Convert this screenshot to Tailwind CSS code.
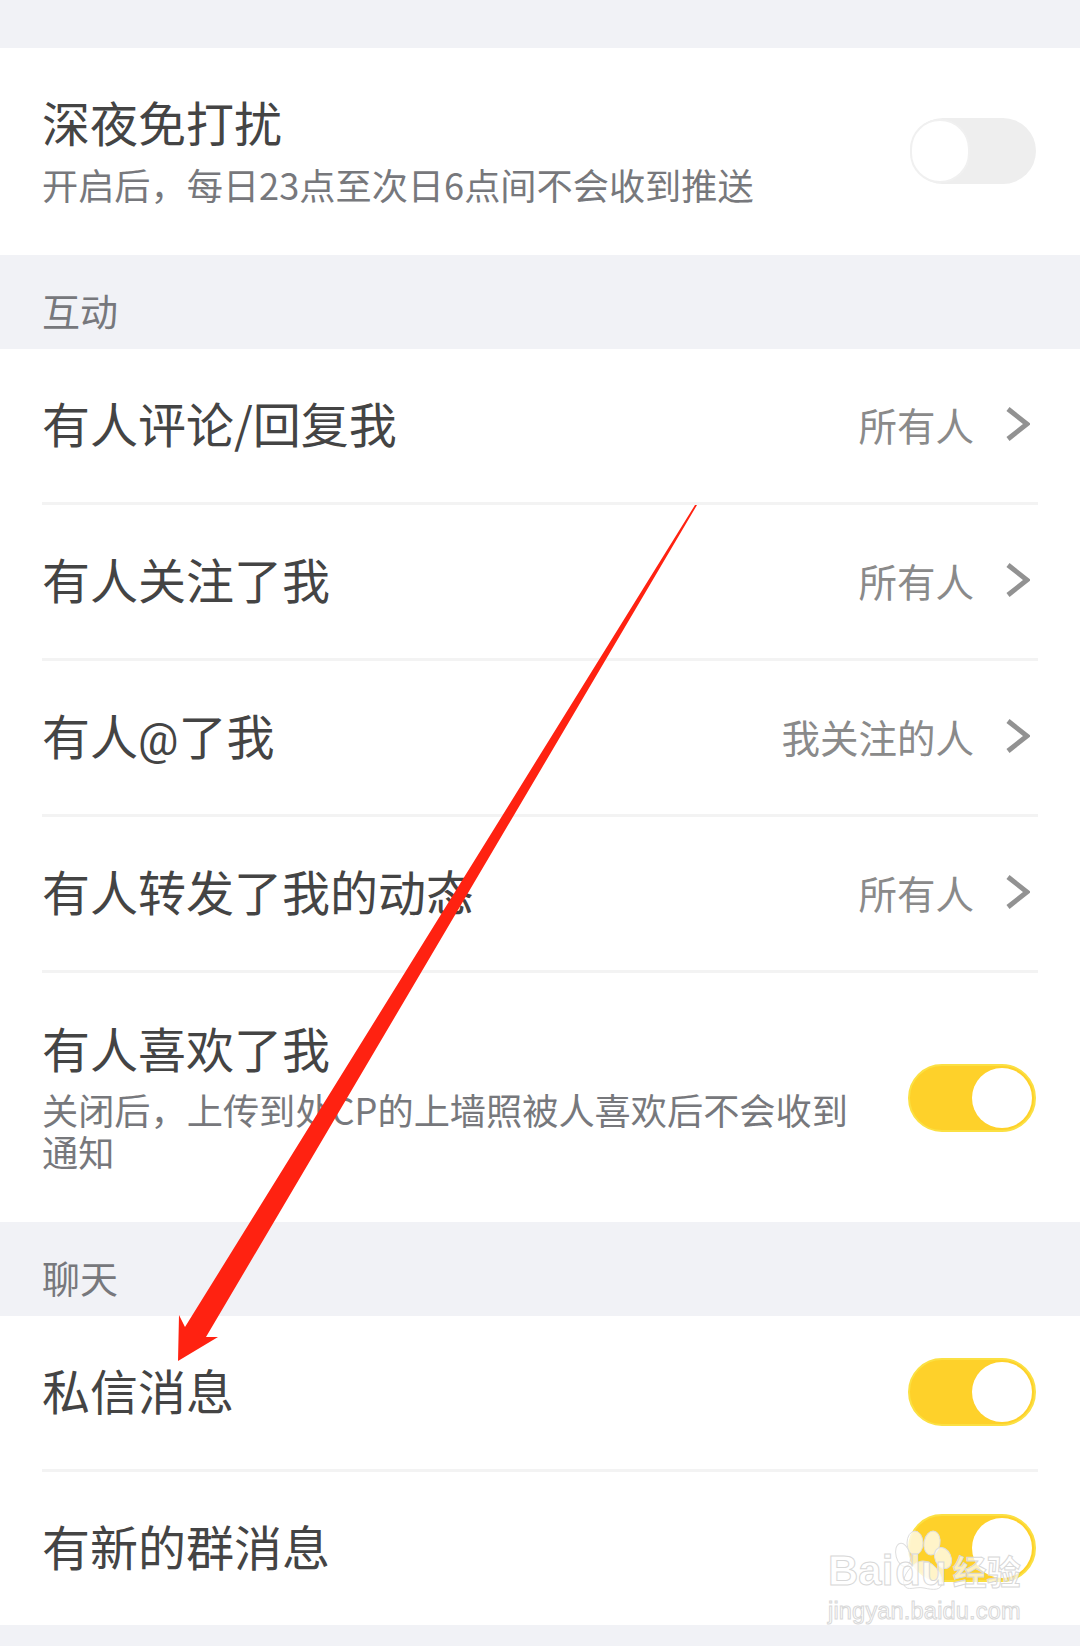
<!DOCTYPE html>
<html lang="zh">
<head>
<meta charset="utf-8">
<script src="https://cdn.jsdelivr.net/npm/@tailwindcss/browser@4"></script>
</head>
<body class="m-0">
<div class="relative w-[1080px] h-[1646px] overflow-hidden bg-[#f1f2f6] text-[#444444] font-['Noto_Sans_CJK_SC','Noto_Sans',sans-serif]">
  <div class="h-[48px]"></div>

  <section class="bg-white h-[207px] px-[42px] flex items-center justify-between">
    <div class="-mt-[4px]">
      <div class="text-[48px] leading-[64px]">深夜免打扰</div>
      <div class="text-[36.2px] leading-[54px] text-[#77787c] mt-[4px]">开启后，每日23点至次日6点间不会收到推送</div>
    </div>
    <div class="w-[126px] h-[66px] rounded-full bg-[#eeeeee] flex items-center -mr-[-2px] -mt-[2px]">
      <div class="w-[60px] h-[64px] rounded-full bg-white border-2 border-[#f0f0f0]"></div>
    </div>
  </section>

  <div class="h-[94px] px-[42px] pt-[30px] text-[38px] leading-[50px] text-[#77787c]">互动</div>

  <section class="bg-white">
    <div class="h-[153px] mx-[42px] flex items-center justify-between">
      <div class="text-[48px] -mt-[8px]">有人评论/回复我</div>
      <div class="flex items-center"><span class="text-[38.5px] text-[#8a8a8a] -mt-[2px]">所有人</span>
        <svg class="ml-[31px] mr-[8px] -mt-[4px]" width="25" height="36" viewBox="0 0 25 36" fill="none" stroke="#929292" stroke-width="5"><path d="M3 3 L22 18 L3 33"/></svg></div>
    </div>
    <div class="h-[3px] mx-[42px] bg-[#f3f3f3]"></div>
    <div class="h-[153px] mx-[42px] flex items-center justify-between">
      <div class="text-[48px] -mt-[8px]">有人关注了我</div>
      <div class="flex items-center"><span class="text-[38.5px] text-[#8a8a8a] -mt-[2px]">所有人</span>
        <svg class="ml-[31px] mr-[8px] -mt-[4px]" width="25" height="36" viewBox="0 0 25 36" fill="none" stroke="#929292" stroke-width="5"><path d="M3 3 L22 18 L3 33"/></svg></div>
    </div>
    <div class="h-[3px] mx-[42px] bg-[#f3f3f3]"></div>
    <div class="h-[153px] mx-[42px] flex items-center justify-between">
      <div class="text-[48px] leading-[72px] -mt-[8px]">有人<span class="font-['Roboto',sans-serif] text-[45px] leading-none">@</span>了我</div>
      <div class="flex items-center"><span class="text-[38.5px] text-[#8a8a8a] -mt-[2px]">我关注的人</span>
        <svg class="ml-[31px] mr-[8px] -mt-[4px]" width="25" height="36" viewBox="0 0 25 36" fill="none" stroke="#929292" stroke-width="5"><path d="M3 3 L22 18 L3 33"/></svg></div>
    </div>
    <div class="h-[3px] mx-[42px] bg-[#f3f3f3]"></div>
    <div class="h-[153px] mx-[42px] flex items-center justify-between">
      <div class="text-[48px] -mt-[8px]">有人转发了我的动态</div>
      <div class="flex items-center"><span class="text-[38.5px] text-[#8a8a8a] -mt-[2px]">所有人</span>
        <svg class="ml-[31px] mr-[8px] -mt-[4px]" width="25" height="36" viewBox="0 0 25 36" fill="none" stroke="#929292" stroke-width="5"><path d="M3 3 L22 18 L3 33"/></svg></div>
    </div>
    <div class="h-[3px] mx-[42px] bg-[#f3f3f3]"></div>
    <div class="h-[249px] mx-[42px] flex items-center justify-between">
      <div class="w-[810px] -mt-[9px]">
        <div class="text-[48px] leading-[64px]">有人喜欢了我</div>
        <div class="text-[36.2px] leading-[42px] text-[#77787c] mt-[9px]">关闭后，上传到处CP的上墙照被人喜欢后不会收到通知</div>
      </div>
      <div class="w-[128px] h-[68px] rounded-full bg-[#fed12a] border-2 border-[#fbe043] flex items-center justify-end pr-[2px] -mr-[-2px]">
        <div class="w-[60px] h-[60px] rounded-full bg-white"></div>
      </div>
    </div>
  </section>

  <div class="h-[94px] px-[42px] pt-[30px] text-[38px] leading-[50px] text-[#77787c]">聊天</div>

  <section class="bg-white">
    <div class="h-[153px] mx-[42px] flex items-center justify-between">
      <div class="text-[48px] -mt-[8px]">私信消息</div>
      <div class="w-[128px] h-[68px] rounded-full bg-[#fed12a] border-2 border-[#fbe043] flex items-center justify-end pr-[2px] -mr-[-2px] -mt-[2px]">
        <div class="w-[60px] h-[60px] rounded-full bg-white"></div>
      </div>
    </div>
    <div class="h-[3px] mx-[42px] bg-[#f3f3f3]"></div>
    <div class="h-[153px] mx-[42px] flex items-center justify-between">
      <div class="text-[48px] -mt-[8px]">有新的群消息</div>
      <div class="w-[128px] h-[68px] rounded-full bg-[#fed12a] border-2 border-[#fbe043] flex items-center justify-end pr-[2px] -mr-[-2px] -mt-[2px]">
        <div class="w-[60px] h-[60px] rounded-full bg-white"></div>
      </div>
    </div>
  </section>

  <!-- red annotation arrow -->
  <svg class="absolute left-0 top-0 pointer-events-none" width="1080" height="1646" viewBox="0 0 1080 1646">
    <polygon fill="#ff2211" points="695,505 697,505 206,1337 218,1337 178,1361 179,1315 185,1327"/>
  </svg>

  <!-- watermark -->
  <svg class="absolute left-[890px] top-[1525px]" width="70" height="72" viewBox="0 0 70 72" fill="#fff" fill-opacity="0.75" stroke="#dedede" stroke-width="1">
    <ellipse cx="13" cy="30" rx="7" ry="12" transform="rotate(-15 13 30)"/>
    <ellipse cx="25" cy="18" rx="8" ry="12"/>
    <ellipse cx="42" cy="18" rx="8" ry="12" transform="rotate(10 42 18)"/>
    <ellipse cx="53" cy="33" rx="8" ry="11" transform="rotate(-25 53 33)"/>
    <path d="M33 36 C43 36 52 48 52 57 C52 66 43 65 34 63 C26 61 17 67 14 60 C11 52 23 36 33 36 Z"/>
  </svg>
  <div class="absolute left-[828px] top-[1546px] flex items-center h-[50px] text-[42px] leading-[50px] font-bold font-['Liberation_Sans',sans-serif] text-white/70 [-webkit-text-stroke:1px_#d8d8d8]">
    <span>Bai</span><span class="ml-[2px]">du</span>
    <span class="ml-[6px] text-[34px] font-['Noto_Sans_CJK_SC',sans-serif]">经验</span>
  </div>
  <div class="absolute left-[828px] top-[1596px] text-[23.5px] leading-[30px] tracking-[0.2px] font-['Liberation_Sans',sans-serif] text-white/70 [-webkit-text-stroke:1px_#d8d8d8]">jingyan.baidu.com</div>
</div>
</body>
</html>
